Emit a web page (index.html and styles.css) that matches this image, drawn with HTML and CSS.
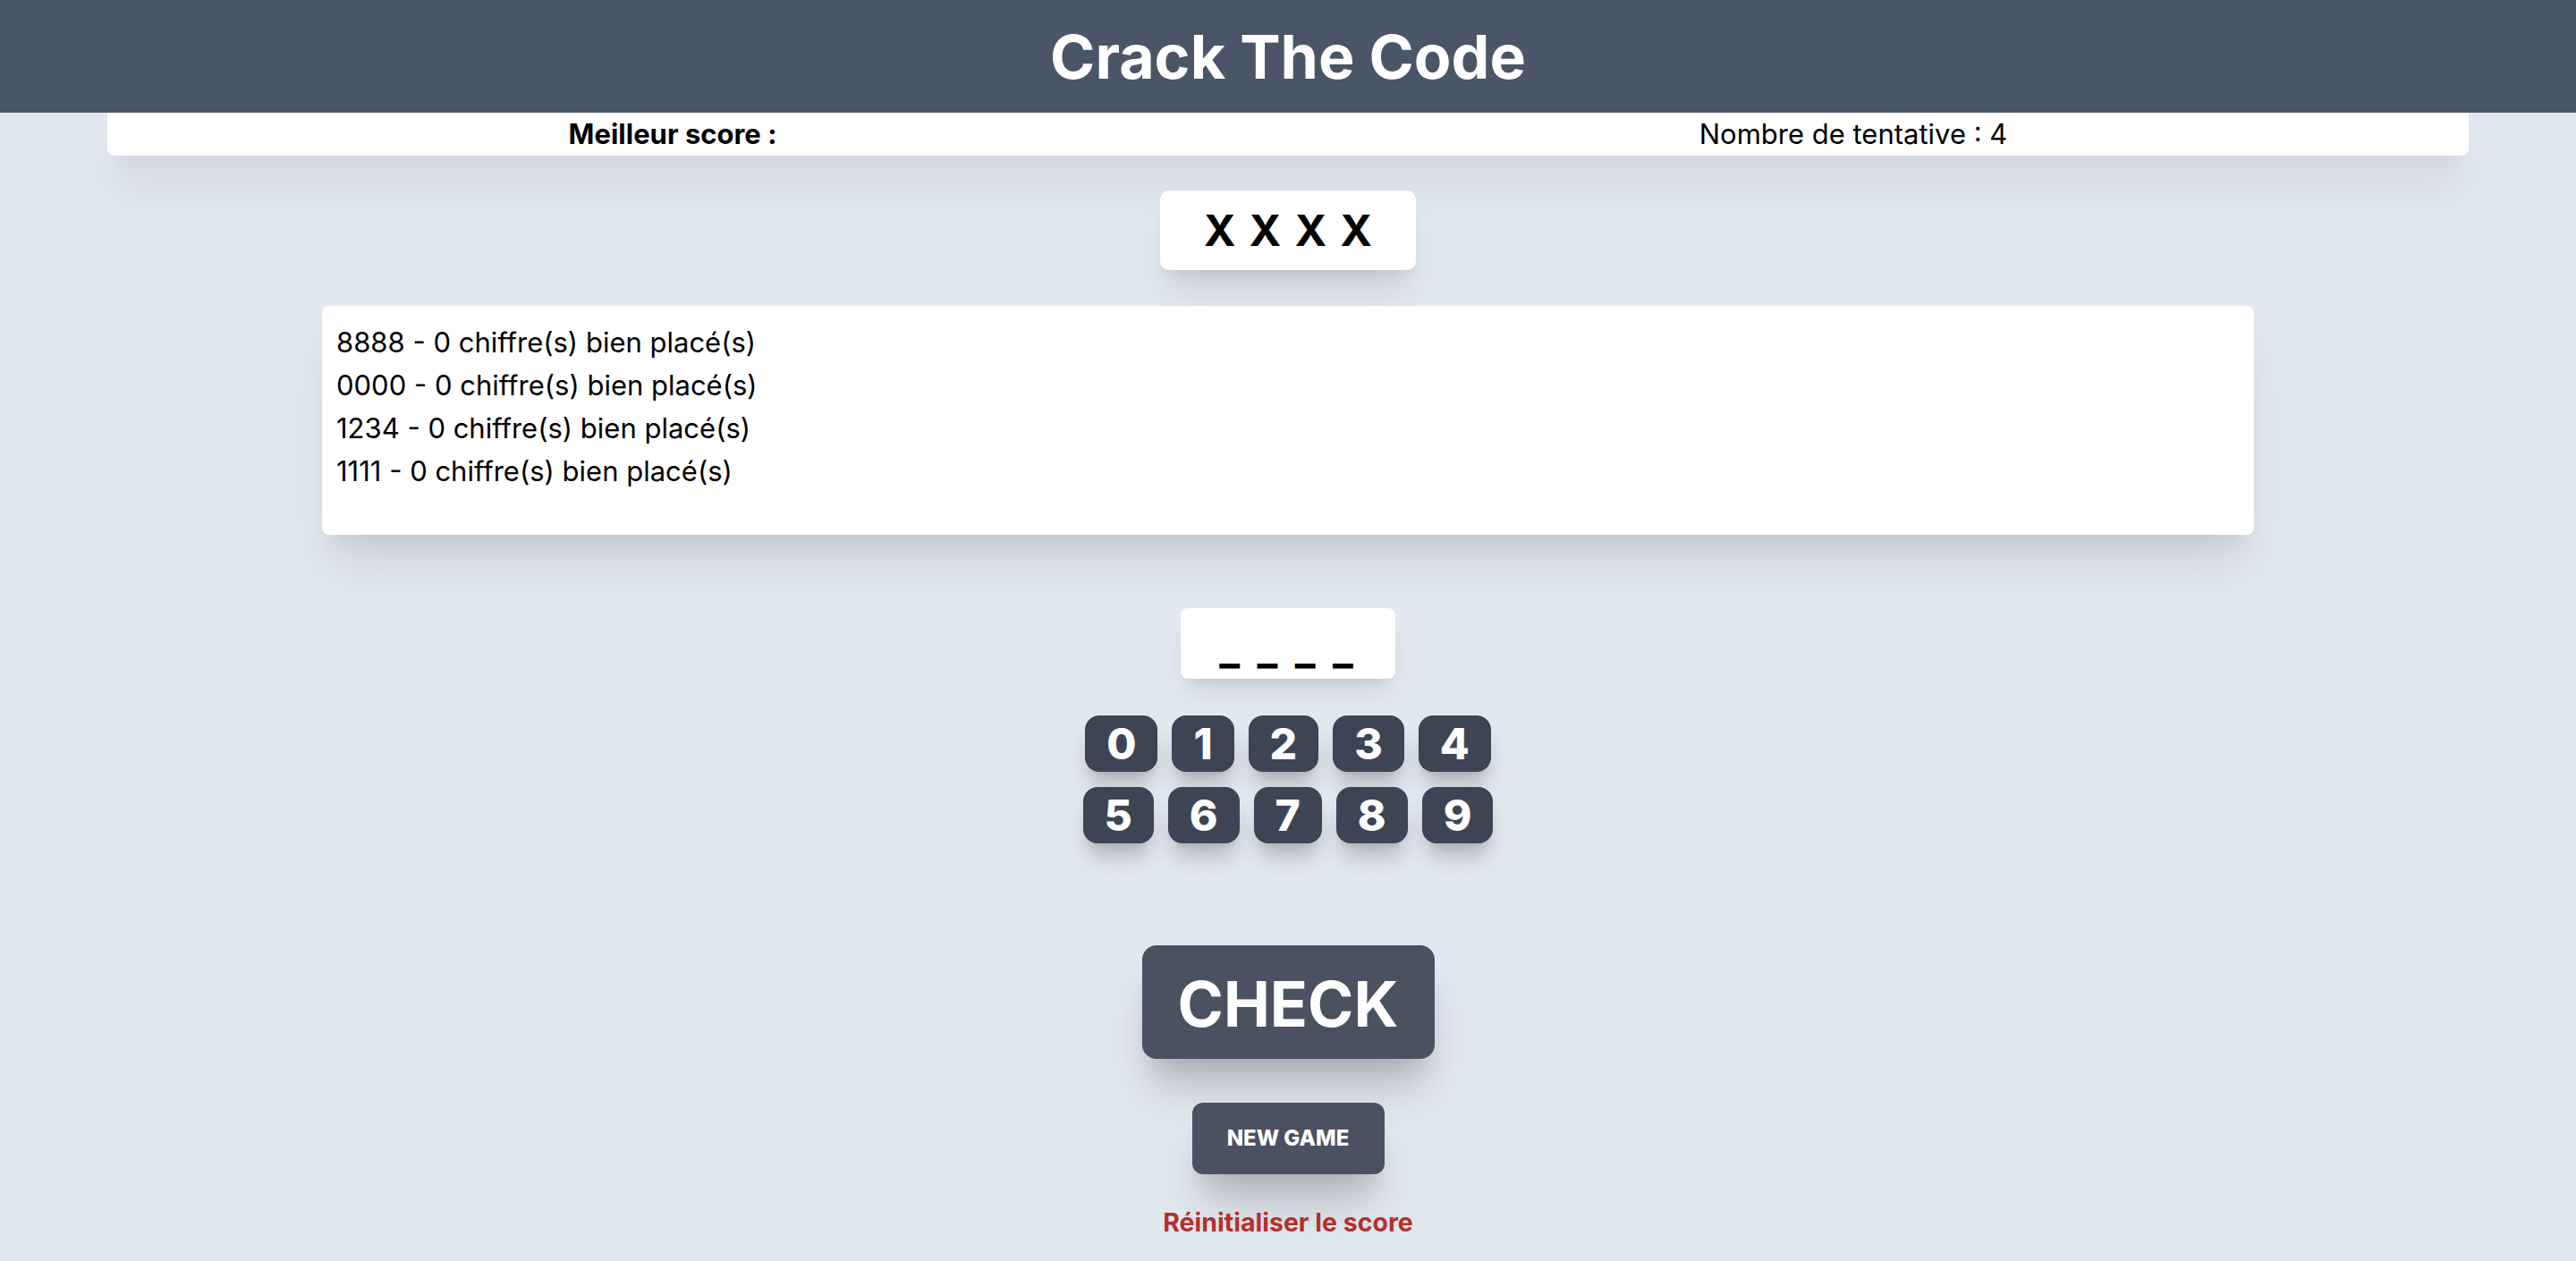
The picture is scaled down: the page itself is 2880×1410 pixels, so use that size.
FILE: index.html
```html
<!DOCTYPE html>
<html lang="fr">
<head>
<meta charset="utf-8">
<title>Crack The Code</title>
<link rel="stylesheet" href="styles.css">
</head>
<body>
<header class="header">
  <h1 class="title">Crack The Code</h1>
</header>
<main class="game">
  <div class="scorebar">
    <span class="best">Meilleur score : </span>
    <span class="tries">Nombre de tentative : 4</span>
  </div>
  <div class="secret">X X X X</div>
  <div class="history">
    <p class="line">8888 - 0 chiffre(s) bien placé(s)</p>
    <p class="line">0000 - 0 chiffre(s) bien placé(s)</p>
    <p class="line">1234 - 0 chiffre(s) bien placé(s)</p>
    <p class="line">1111 - 0 chiffre(s) bien placé(s)</p>
  </div>
  <div class="entry">_ _ _ _</div>
  <div class="keypad">
    <div class="keyrow">
      <button class="key">0</button>
      <button class="key">1</button>
      <button class="key">2</button>
      <button class="key">3</button>
      <button class="key">4</button>
    </div>
    <div class="keyrow">
      <button class="key">5</button>
      <button class="key">6</button>
      <button class="key">7</button>
      <button class="key">8</button>
      <button class="key">9</button>
    </div>
  </div>
  <button class="check">CHECK</button>
  <button class="newgame">NEW GAME</button>
  <a class="reset">Réinitialiser le score</a>
</main>
</body>
</html>
```
FILE: styles.css
```css
* { box-sizing: border-box; }
html, body { margin: 0; padding: 0; }
body {
  background: #e2e8f0;
  font-family: Inter, "Liberation Sans", sans-serif;
  color: #000;
  min-height: 1410px;
}
.header {
  background: #4a5568;
  height: 126px;
  display: flex;
  align-items: center;
  justify-content: center;
}
.title {
  margin: 0;
  color: #fff;
  font-size: 68px;
  line-height: 80px;
  font-weight: 700;
  letter-spacing: 0;
}
.game {
  display: flex;
  flex-direction: column;
  align-items: center;
}
.scorebar {
  width: 2640px;
  height: 48px;
  background: #fff;
  border-radius: 0 0 8px 8px;
  display: flex;
  justify-content: space-around;
  align-items: center;
  font-size: 31px;
  line-height: 48px;
  box-shadow: 0 40px 50px -10px rgba(0,0,0,.1), 0 20px 20px -10px rgba(0,0,0,.04);
}
.best { font-weight: 700; }
.secret {
  margin-top: 39px;
  width: 286px;
  height: 89px;
  background: #fff;
  border-radius: 10px;
  display: flex;
  align-items: center;
  justify-content: center;
  font-size: 48px;
  font-weight: 700;
  letter-spacing: 2px;
  padding-left: 2px;
  box-shadow: 0 30px 40px -10px rgba(0,0,0,.12), 0 10px 12px -6px rgba(0,0,0,.06);
}
.history {
  margin-top: 40px;
  width: 2160px;
  height: 256px;
  background: #fff;
  border-radius: 8px;
  padding: 17px 16px 16px;
  font-size: 31px;
  line-height: 48px;
  box-shadow: 0 40px 50px -10px rgba(0,0,0,.1), 0 20px 20px -10px rgba(0,0,0,.04);
}
.line { margin: 0; }
.entry {
  margin-top: 82px;
  width: 240px;
  height: 79px;
  background: #fff;
  border-radius: 8px;
  display: flex;
  align-items: flex-end;
  justify-content: center;
  padding-bottom: 10px;
  font-size: 48px;
  line-height: 48px;
  font-weight: 700;
  letter-spacing: 4px;
  box-shadow: 0 20px 30px -10px rgba(0,0,0,.12), 0 8px 10px -6px rgba(0,0,0,.06);
}
.keypad {
  margin-top: 41px;
  display: flex;
  flex-direction: column;
  gap: 17px;
}
.keyrow {
  display: flex;
  justify-content: center;
  gap: 16px;
}
.key {
  border: 0;
  margin: 0;
  height: 63px;
  padding: 0 24px;
  background: #3d4453;
  color: #fff;
  border-radius: 16px;
  font-family: Inter, "Liberation Sans", sans-serif;
  font-size: 48px;
  line-height: 63px;
  font-weight: 800;
  box-shadow: 0 20px 25px -5px rgba(0,0,0,.2), 0 8px 10px -6px rgba(0,0,0,.1);
}
.check {
  margin-top: 114px;
  border: 0;
  width: 327px;
  height: 127px;
  background: #4a5160;
  color: #fff;
  border-radius: 16px;
  font-family: Inter, "Liberation Sans", sans-serif;
  font-size: 69.5px;
  font-weight: 700;
  line-height: 80px;
  padding: 4px 0 0;
  box-shadow: 0 40px 50px -10px rgba(0,0,0,.2), 0 20px 20px -10px rgba(0,0,0,.08);
}
.newgame {
  margin-top: 49px;
  border: 0;
  width: 215px;
  height: 80px;
  background: #4a5160;
  color: #fff;
  border-radius: 12px;
  font-family: Inter, "Liberation Sans", sans-serif;
  font-size: 24px;
  font-weight: 800;
  line-height: 32px;
  padding: 0;
  box-shadow: 0 40px 50px -10px rgba(0,0,0,.2), 0 20px 20px -10px rgba(0,0,0,.08);
}
.reset {
  margin-top: 38px;
  color: #b5302a;
  font-size: 28.5px;
  font-weight: 700;
  line-height: 32px;
}
```
